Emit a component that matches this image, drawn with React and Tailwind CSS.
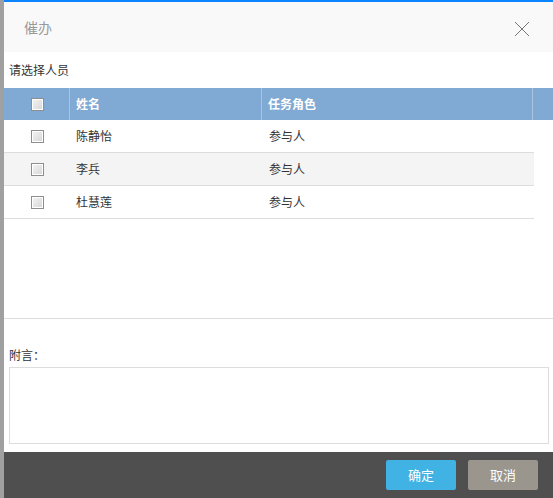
import React from "react";

const people = [
  { name: "陈静怡", role: "参与人" },
  { name: "李兵", role: "参与人" },
  { name: "杜慧莲", role: "参与人" },
];

const Box = () => (
  <span className="block w-[13px] h-[13px] border border-[#8e8e8e] bg-gradient-to-br from-[#f4f4f4] to-[#d6d6d6] shadow-[inset_0_0_0_1px_#fff]" />
);

const App = () => {
  return (
    <div
      className="flex w-[553px] h-[498px] bg-white text-[12px] text-[#333]"
      style={{ fontFamily: '"Noto Sans CJK SC", "Noto Sans", sans-serif' }}
    >
      {/* left edge of the page behind */}
      <div className="w-[4px] shrink-0 bg-[#a0a0a0]" />

      <div className="flex-1 flex flex-col border-t-2 border-[#0a84ff]">
        {/* title bar */}
        <div className="h-[50px] shrink-0 bg-[#f9f9f9] flex items-center justify-between pl-[20px] pr-[23px]">
          <span className="text-[14px] text-[#999]">催办</span>
          <svg width="16" height="16" viewBox="0 0 16 16" className="mt-[4px]">
            <path d="M1 1L15 15M15 1L1 15" stroke="#777" strokeWidth="1" />
          </svg>
        </div>

        <div className="h-[36px] shrink-0 flex items-center pl-[5px]">请选择人员</div>

        {/* people table */}
        <div className="h-[231px] shrink-0 border-b border-[#ddd]">
          <div className="flex h-[32px] bg-[#80aad4] text-white font-bold">
            <div className="w-[66px] flex items-center justify-center pl-[1px] border-r border-[#a8c5e2]">
              <Box />
            </div>
            <div className="w-[192px] flex items-center pl-[6px] border-r border-[#a8c5e2]">姓名</div>
            <div className="w-[271px] flex items-center pl-[6px] border-r border-[#a8c5e2]">任务角色</div>
            <div className="flex-1" />
          </div>
          {people.map((p, i) => (
            <div
              key={i}
              className={`flex h-[33px] w-[530px] border-b border-[#ddd] ${i === 1 ? "bg-[#f4f4f4]" : "bg-white"}`}
            >
              <div className="w-[66px] flex items-center justify-center pl-[1px]">
                <Box />
              </div>
              <div className="w-[192px] flex items-center pl-[6px]">{p.name}</div>
              <div className="flex-1 flex items-center pl-[7px]">{p.role}</div>
            </div>
          ))}
        </div>

        {/* remark */}
        <div className="flex-1 flex flex-col pl-[5px] pr-[4px]">
          <div className="h-[48px] flex items-end pb-[3px]">附言：</div>
          <textarea className="h-[77px] w-full border border-[#ddd] resize-none outline-none" />
        </div>

        {/* footer */}
        <div className="h-[46px] shrink-0 bg-[#4f4f4f] flex items-center justify-end gap-[12px] pr-[15px] mt-[8px]">
          <button className="w-[70px] h-[30px] rounded-[2px] bg-[#41b2e4] text-white text-[13px]">确定</button>
          <button className="w-[70px] h-[30px] rounded-[2px] bg-[#9a958d] text-white text-[13px]">取消</button>
        </div>
      </div>
    </div>
  );
};

export default App;
